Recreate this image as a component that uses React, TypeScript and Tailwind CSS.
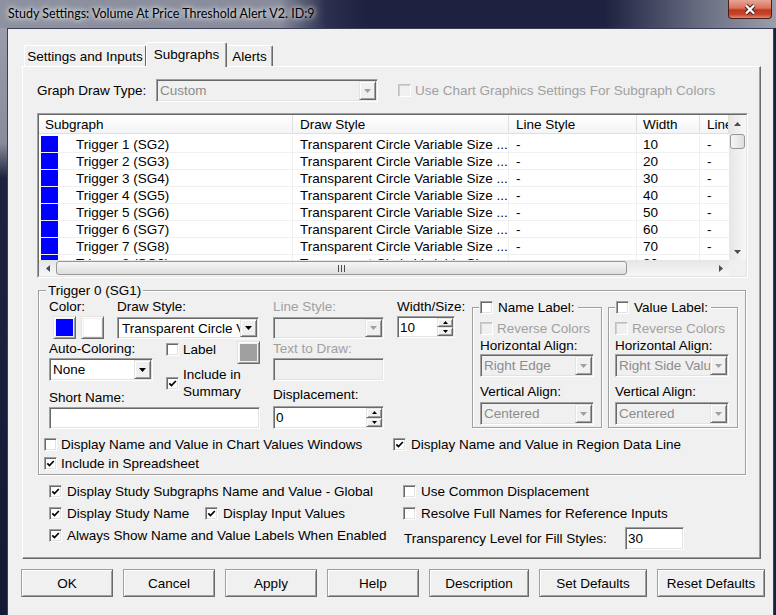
import React from "react";

const FONT = "font-['Liberation_Sans',Arial,sans-serif]";

// classic 3D edges
const sunken =
  "border border-t-[#a0a0a0] border-l-[#a0a0a0] border-r-white border-b-white shadow-[inset_1px_1px_0_#696969,inset_-1px_-1px_0_#e3e3e3]";
const raised =
  "border border-t-[#e3e3e3] border-l-[#e3e3e3] border-r-[#696969] border-b-[#696969] shadow-[inset_1px_1px_0_#ffffff,inset_-1px_-1px_0_#a0a0a0]";
const btn =
  "border border-[#a0a0a0] border-r-[#696969] border-b-[#696969] shadow-[inset_1px_1px_0_#ffffff,inset_-1px_-1px_0_#a0a0a0] bg-[#f0f0f0]";
const etched = "border border-[#a0a0a0] shadow-[inset_1px_1px_0_#ffffff,1px_1px_0_#ffffff]";

function CheckBox({ checked = false, disabled = false }: { checked?: boolean; disabled?: boolean }) {
  return (
    <span
      className={`w-[13px] h-[13px] shrink-0 flex items-center justify-center border ${
        disabled
          ? "border-t-[#c0c0c0] border-l-[#c0c0c0] border-r-white border-b-white shadow-[inset_1px_1px_0_#cfcfcf] bg-[#f0f0f0]"
          : "border-t-[#a0a0a0] border-l-[#a0a0a0] border-r-white border-b-white shadow-[inset_1px_1px_0_#696969,inset_-1px_-1px_0_#e3e3e3] bg-white"
      }`}
    >
      {checked && (
        <svg width="9" height="9" viewBox="0 0 9 9">
          <path d="M1.3 4.3 L3.5 6.6 L7.8 2" fill="none" stroke="#000" strokeWidth="1.7" />
        </svg>
      )}
    </span>
  );
}

function Check({
  label,
  checked = false,
  disabled = false,
  gap = "gap-[4px]",
}: {
  label: string;
  checked?: boolean;
  disabled?: boolean;
  gap?: string;
}) {
  return (
    <div className={`flex items-center h-[15px] whitespace-nowrap ${gap} ${disabled ? "text-[#a0a0a0]" : ""}`}>
      <CheckBox checked={checked} disabled={disabled} />
      <span>{label}</span>
    </div>
  );
}

function Arrow({ dir, color = "#000" }: { dir: "down" | "up"; color?: string }) {
  return dir === "down" ? (
    <svg width="7" height="4" viewBox="0 0 7 4">
      <path d="M0 0H7L3.5 4Z" fill={color} />
    </svg>
  ) : (
    <svg width="7" height="4" viewBox="0 0 7 4">
      <path d="M0 4H7L3.5 0Z" fill={color} />
    </svg>
  );
}

function Combo({
  text,
  cls,
  disabled = false,
  pad = "pl-[3px]",
}: {
  text: string;
  cls: string;
  disabled?: boolean;
  pad?: string;
}) {
  return (
    <div className={`${cls} flex ${sunken} ${disabled ? "bg-[#f0f0f0] text-[#8c8c8c]" : "bg-white text-black"}`}>
      <div className={`flex-1 min-w-0 overflow-hidden whitespace-nowrap flex items-center ${pad}`}>{text}</div>
      <div className={`w-[17px] my-[1px] mr-[1px] flex items-center justify-center bg-[#f0f0f0] ${raised}`}>
        <Arrow dir="down" color={disabled ? "#a0a0a0" : "#000"} />
      </div>
    </div>
  );
}

function Edit({ value = "", cls, disabled = false }: { value?: string; cls: string; disabled?: boolean }) {
  return (
    <div className={`${cls} flex items-center pl-[2px] ${sunken} ${disabled ? "bg-[#f0f0f0]" : "bg-white"}`}>
      {value}
    </div>
  );
}

function Spinner({ value, cls }: { value: string; cls: string }) {
  return (
    <div className={`${cls} flex ${sunken} bg-white text-black`}>
      <div className="flex-1 flex items-center pl-[2px]">{value}</div>
      <div className="w-[16px] my-[1px] mr-[1px] flex flex-col">
        <div className={`flex-1 flex items-center justify-center bg-[#f0f0f0] ${raised}`}>
          <svg width="5" height="3" viewBox="0 0 5 3">
            <path d="M0 3H5L2.5 0Z" fill="#000" />
          </svg>
        </div>
        <div className={`flex-1 flex items-center justify-center bg-[#f0f0f0] ${raised}`}>
          <svg width="5" height="3" viewBox="0 0 5 3">
            <path d="M0 0H5L2.5 3Z" fill="#000" />
          </svg>
        </div>
      </div>
    </div>
  );
}

function Swatch({ fill }: { fill: string }) {
  return (
    <div className={`w-[23px] h-[23px] p-[2px] bg-[#f0f0f0] ${raised}`}>
      <div className={`w-full h-full ${fill}`} />
    </div>
  );
}

function LabelGroup({ title, hAlign, ml, pl }: { title: string; hAlign: string; ml: string; pl: string }) {
  return (
    <fieldset className={`w-[130px] h-[128px] mt-[1px] ${ml} ${etched}`}>
      <legend className="ml-[6px] pl-[1px] pr-[3px] bg-[#f0f0f0]">
        <Check label={title} gap="gap-[5px]" />
      </legend>
      <div className={`${pl} flex flex-col`}>
        <div className="mt-[6px]">
          <Check disabled label="Reverse Colors" />
        </div>
        <div className="mt-[2px]">Horizontal Align:</div>
        <Combo disabled text={hAlign} cls="w-[114px] h-[23px] mt-[1px]" />
        <div className="mt-[7px]">Vertical Align:</div>
        <Combo disabled text="Centered" cls="w-[114px] h-[23px] mt-[3px]" />
      </div>
    </fieldset>
  );
}

const colW = ["w-[254px]", "w-[216px]", "w-[128px]", "w-[63px]", "w-[29px]"];
const colPad = ["pl-[6px]", "pl-[7px]", "pl-[7px]", "pl-[6px]", "pl-[7px]"];
const headers = ["Subgraph", "Draw Style", "Line Style", "Width", "Line Style"];

const rows = [1, 2, 3, 4, 5, 6, 7, 8].map((i) => ({
  name: `Trigger ${i} (SG${i + 1})`,
  style: "Transparent Circle Variable Size ...",
  width: String(i * 10),
}));

const track = "bg-[linear-gradient(180deg,#e6e6e6,#f7f7f7)]";
const vtrack = "bg-[linear-gradient(90deg,#e6e6e6,#f7f7f7)]";
const thumb = "rounded-[3px] border border-[#979797] bg-[linear-gradient(180deg,#f6f6f6,#dedede)]";
const vthumb = "rounded-[3px] border border-[#979797] bg-[linear-gradient(90deg,#f6f6f6,#dedede)]";

function SubgraphList() {
  return (
    <div className="w-[711px] h-[165px] border border-t-[#a0a0a0] border-l-[#a0a0a0] border-r-white border-b-white">
      <div className="h-full flex border border-t-[#696969] border-l-[#696969] border-r-[#e3e3e3] border-b-[#e3e3e3] bg-white">
        <div className="w-[690px] flex flex-col">
          <div className="h-[19px] flex border-b border-[#e0e0e0] bg-[linear-gradient(180deg,#ffffff,#f3f4f6)] overflow-hidden">
            {headers.map((h, i) => (
              <div
                key={i}
                className={`${colW[i]} shrink-0 ${colPad[i]} flex items-center whitespace-nowrap overflow-hidden border-r border-[#e0e0e0]`}
              >
                {h}
              </div>
            ))}
          </div>
          <div className="h-[126px] overflow-hidden pt-[2px]">
            {rows.map((r) => (
              <div key={r.name} className="h-[17px] flex border-b border-[#f0f0f0] whitespace-nowrap">
                <div className={`${colW[0]} shrink-0 flex items-center border-r border-[#f0f0f0]`}>
                  <div className="w-[17px] h-[16px] ml-[2px] bg-[#0000ff]" />
                  <span className="ml-[18px]">{r.name}</span>
                </div>
                <div className={`${colW[1]} shrink-0 ${colPad[1]} flex items-center border-r border-[#f0f0f0] overflow-hidden`}>
                  {r.style}
                </div>
                <div className={`${colW[2]} shrink-0 ${colPad[2]} flex items-center border-r border-[#f0f0f0]`}>-</div>
                <div className={`${colW[3]} shrink-0 ${colPad[3]} flex items-center border-r border-[#f0f0f0]`}>
                  {r.width}
                </div>
                <div className={`${colW[4]} shrink-0 ${colPad[4]} flex items-center`}>-</div>
              </div>
            ))}
          </div>
          <div className={`h-[16px] flex ${track}`}>
            <div className="w-[17px] flex items-center justify-center">
              <svg width="4" height="7" viewBox="0 0 4 7">
                <path d="M4 0V7L0 3.5Z" fill="#4d4d4d" />
              </svg>
            </div>
            <div className={`w-[571px] my-[1px] flex items-center justify-center ${thumb}`}>
              <svg width="7" height="7" viewBox="0 0 7 7">
                <path d="M0.5 0V7M3.5 0V7M6.5 0V7" stroke="#4d4d4d" strokeWidth="1" />
              </svg>
            </div>
            <div className="flex-1" />
            <div className="w-[17px] flex items-center justify-center">
              <svg width="4" height="7" viewBox="0 0 4 7">
                <path d="M0 0V7L4 3.5Z" fill="#4d4d4d" />
              </svg>
            </div>
          </div>
        </div>
        <div className="w-[17px] flex flex-col">
          <div className={`h-[145px] flex flex-col ${vtrack}`}>
            <div className="h-[17px] flex items-center justify-center">
              <Arrow dir="up" color="#4d4d4d" />
            </div>
            <div className={`h-[15px] mx-[1px] mt-[2px] ${vthumb}`} />
            <div className="flex-1" />
            <div className="h-[17px] flex items-center justify-center">
              <Arrow dir="down" color="#4d4d4d" />
            </div>
          </div>
          <div className="h-[16px] bg-[#f0f0f0]" />
        </div>
      </div>
    </div>
  );
}

function TriggerGroup() {
  return (
    <fieldset className={`w-[708px] h-[192px] mt-[5px] ml-[1px] ${etched}`}>
      <legend className="ml-[7px] px-[2px] bg-[#f0f0f0]">Trigger 0 (SG1)</legend>
      <div className="pl-[5px]">
        <div className="flex items-start ml-[5px] mt-[1px]">
          {/* colour, draw style, auto colouring, short name */}
          <div className="w-[211px] flex flex-col">
            <div className="flex">
              <div className="w-[68px]">
                <div>Color:</div>
                <div className="flex gap-[5px] ml-[4px] mt-[2px]">
                  <Swatch fill="bg-[#0000ff]" />
                  <Swatch fill="bg-white" />
                </div>
              </div>
              <div>
                <div>Draw Style:</div>
                <Combo text="Transparent Circle Variable Size" cls="w-[142px] h-[22px] mt-[3px]" pad="pl-[4px]" />
              </div>
            </div>
            <div className="flex mt-[2px]">
              <div className="w-[117px]">
                <div>Auto-Coloring:</div>
                <Combo text="None" cls="w-[104px] h-[23px] mt-[2px]" />
              </div>
              <div className="flex-1 flex flex-col">
                <div className="flex items-start justify-between">
                  <div className="pt-[1px]">
                    <Check label="Label" />
                  </div>
                  <Swatch fill="bg-[#a0a0a0]" />
                </div>
                <div className="flex items-center gap-[4px] mt-[2px]">
                  <CheckBox checked />
                  <div className="leading-[17px]">
                    Include in
                    <br />
                    Summary
                  </div>
                </div>
              </div>
            </div>
            <div className="mt-[-10px]">Short Name:</div>
            <Edit cls="w-[211px] h-[22px] mt-[2px]" />
          </div>

          {/* line style, text to draw, displacement */}
          <div className="w-[111px] ml-[13px] flex flex-col">
            <div className="text-[#a0a0a0]">Line Style:</div>
            <Combo disabled text="" cls="w-[111px] h-[22px] mt-[3px]" />
            <div className="mt-[2px] text-[#a0a0a0]">Text to Draw:</div>
            <Edit disabled cls="w-[111px] h-[23px] mt-[2px]" />
            <div className="mt-[6px]">Displacement:</div>
            <Spinner value="0" cls="w-[111px] h-[23px] mt-[4px]" />
          </div>

          <div className="w-[58px] ml-[13px] flex flex-col">
            <div className="whitespace-nowrap">Width/Size:</div>
            <Spinner value="10" cls="w-[58px] h-[22px] mt-[2px]" />
          </div>

          <LabelGroup title="Name Label:" hAlign="Right Edge" ml="ml-[17px]" pl="pl-[7px]" />
          <LabelGroup title="Value Label:" hAlign="Right Side Value" ml="ml-[6px]" pl="pl-[6px]" />
        </div>

        <div className="flex mt-[8px]">
          <div className="w-[349px]">
            <Check label="Display Name and Value in Chart Values Windows" />
          </div>
          <Check checked label="Display Name and Value in Region Data Line" gap="gap-[5px]" />
        </div>
        <div className="mt-[4px]">
          <Check checked label="Include in Spreadsheet" />
        </div>
      </div>
    </fieldset>
  );
}

const buttons: [string, string][] = [
  ["OK", "w-[92px]"],
  ["Cancel", "w-[92px]"],
  ["Apply", "w-[92px]"],
  ["Help", "w-[92px]"],
  ["Description", "w-[100px]"],
  ["Set Defaults", "w-[108px]"],
  ["Reset Defaults", "w-[108px]"],
];

export default function App() {
  return (
    <div className={`w-[776px] h-[615px] overflow-hidden flex flex-col bg-[#151a36] text-[13.5px] leading-[15px] text-black ${FONT}`}>
      {/* title bar */}
      <div className="h-[28px] shrink-0 flex items-start justify-between bg-[linear-gradient(90deg,#8d91a0_0%,#878b9a_36%,#2c304e_42%,#1e2240_47%,#1e2240_78%,#666b80_90%,#9a9eab_100%)]">
        <div className="pl-[8px] pt-[6px] font-['Lato',sans-serif] text-[12.5px] text-black [text-shadow:0_0_5px_#ffffff,0_0_9px_rgba(255,255,255,0.9)]">
          Study Settings: Volume At Price Threshold Alert V2. ID:9
        </div>
        <div className="w-[44px] h-[19px] mr-[4px] rounded-b-[4px] border border-t-0 border-[#4a1d17] bg-[linear-gradient(180deg,#e8a596_0%,#d9725d_45%,#c2381f_55%,#c4452c_80%,#dd8a70_100%)] flex items-center justify-center">
          <svg width="14" height="11" viewBox="0 0 14 11">
            <path d="M3 1.5 L11 9.5 M11 1.5 L3 9.5" stroke="#402020" strokeWidth="4.2" />
            <path d="M3 1.5 L11 9.5 M11 1.5 L3 9.5" stroke="#ffffff" strokeWidth="2.3" />
          </svg>
        </div>
      </div>

      <div className="flex flex-1 min-h-0">
        <div className="w-[7px] bg-[linear-gradient(180deg,#9a9eaa_0px,#888c99_115px,#1d2241_150px,#141935_100%)]" />
        <div className="flex-1 flex flex-col bg-[#f0f0f0] border-l border-t border-r border-[#3b3f57] pt-[13px]">
          {/* tabs */}
          <div className="ml-[14px] w-[739px]">
            <div className="flex items-end h-[24px] pl-[2px]">
              <div className="w-[122px] h-[21px] flex items-center justify-center rounded-t-[2px] border border-b-0 border-t-white border-l-white border-r-[#696969] bg-[#f0f0f0]">
                Settings and Inputs
              </div>
              <div className="w-[81px] h-[25px] -mb-px relative z-10 flex items-center justify-center pb-[2px] rounded-t-[2px] border border-b-0 border-t-white border-l-white border-r-[#696969] shadow-[inset_-1px_0_0_#a0a0a0] bg-[#f0f0f0]">
                Subgraphs
              </div>
              <div className="w-[46px] h-[21px] flex items-center justify-center rounded-t-[2px] border border-b-0 border-t-white border-l-0 border-r-[#696969] shadow-[inset_-1px_0_0_#a0a0a0] bg-[#f0f0f0]">
                Alerts
              </div>
            </div>

            <div className="h-[493px] border border-t-white border-l-white border-r-[#696969] border-b-[#696969] shadow-[inset_-1px_-1px_0_#a0a0a0] pl-[14px]">
              <div className="flex items-center mt-[12px] h-[23px]">
                <div className="w-[119px]">Graph Draw Type:</div>
                <Combo disabled text="Custom" cls="w-[222px] h-[23px]" />
                <div className="ml-[20px]">
                  <Check disabled label="Use Chart Graphics Settings For Subgraph Colors" />
                </div>
              </div>

              <div className="mt-[11px]">
                <SubgraphList />
              </div>

              <TriggerGroup />

              <div className="flex mt-[9px] ml-[12px]">
                <div className="w-[354px] flex flex-col gap-[7px]">
                  <Check checked label="Display Study Subgraphs Name and Value - Global" gap="gap-[5px]" />
                  <div className="flex">
                    <div className="w-[156px]">
                      <Check checked label="Display Study Name" gap="gap-[5px]" />
                    </div>
                    <Check checked label="Display Input Values" gap="gap-[5px]" />
                  </div>
                  <Check checked label="Always Show Name and Value Labels When Enabled" gap="gap-[5px]" />
                </div>
                <div className="flex flex-col">
                  <Check label="Use Common Displacement" gap="gap-[5px]" />
                  <div className="mt-[7px]">
                    <Check label="Resolve Full Names for Reference Inputs" gap="gap-[5px]" />
                  </div>
                  <div className="mt-[6px] flex items-center h-[23px]">
                    <div className="w-[222px] pl-[1px]">Transparency Level for Fill Styles:</div>
                    <Edit value="30" cls="w-[59px] h-[23px]" />
                  </div>
                </div>
              </div>
            </div>
          </div>

          {/* dialog buttons */}
          <div className="flex gap-[10px] ml-[13px] mt-[10px]">
            {buttons.map(([t, w]) => (
              <div key={t} className={`${w} h-[28px] flex items-center justify-center ${btn}`}>
                {t}
              </div>
            ))}
          </div>
        </div>
        <div className="w-[2px] bg-[#1a1f3d]" />
      </div>
    </div>
  );
}
